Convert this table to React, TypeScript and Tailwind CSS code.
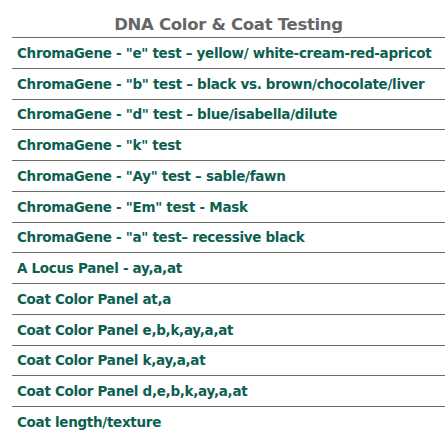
import React from "react";

const tests = [
  'ChromaGene - "e" test – yellow/ white-cream-red-apricot',
  'ChromaGene - "b" test – black vs. brown/chocolate/liver',
  'ChromaGene - "d" test – blue/isabella/dilute',
  'ChromaGene - "k" test',
  'ChromaGene - "Ay" test – sable/fawn',
  'ChromaGene - "Em" test - Mask',
  'ChromaGene - "a" test– recessive black',
  "A Locus Panel - ay,a,at",
  "Coat Color Panel at,a",
  "Coat Color Panel e,b,k,ay,a,at",
  "Coat Color Panel k,ay,a,at",
  "Coat Color Panel d,e,b,k,ay,a,at",
  "Coat length/texture",
];

const App: React.FC = () => {
  return (
    <div className="min-h-screen bg-white pl-3 font-['DejaVu_Sans',Verdana,sans-serif]">
      <h2 className="h-[37px] pt-[14px] flex items-center justify-center text-[16.5px] font-bold text-[#666666] tracking-[-0.3px]">
        DNA Color &amp; Coat Testing
      </h2>
      <ul>
        {tests.map((name) => (
          <li
            key={name}
            className="h-[30.75px] border-t border-[#6b6b6b] pl-[5px] flex items-center text-[13.5px] font-bold text-[#0d5f52] tracking-[-0.3px] whitespace-nowrap"
          >
            {name}
          </li>
        ))}
      </ul>
    </div>
  );
};

export default App;
